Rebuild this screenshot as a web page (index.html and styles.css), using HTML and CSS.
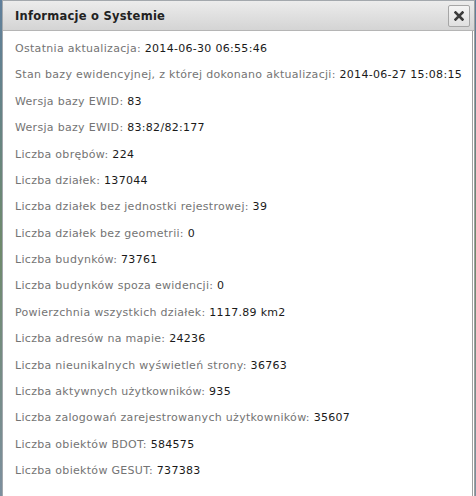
FILE: index.html
```html
<!DOCTYPE html>
<html lang="pl">
<head>
  <meta charset="UTF-8">
  <meta name="viewport" content="width=device-width, initial-scale=1.0">
  <title>Informacje o Systemie</title>
  <link rel="stylesheet" href="styles.css">
</head>
<body>
  <div class="dialog">
    <div class="dialog-header">
      <span class="dialog-title">Informacje o Systemie</span>
      <span class="dialog-close">
        <svg width="10" height="10" viewBox="0 0 10 10">
          <path d="M1.5 1.5 L8.5 8.5 M8.5 1.5 L1.5 8.5" stroke="#3c3c3c" stroke-width="2.6" stroke-linecap="square"/>
        </svg>
      </span>
    </div>
    <div class="dialog-content">
      <p>Ostatnia aktualizacja: <b>2014-06-30 06:55:46</b></p>
      <p>Stan bazy ewidencyjnej, z której dokonano aktualizacji: <b>2014-06-27 15:08:15</b></p>
      <p>Wersja bazy EWID: <b>83</b></p>
      <p>Wersja bazy EWID: <b>83:82/82:177</b></p>
      <p>Liczba obrębów: <b>224</b></p>
      <p>Liczba działek: <b>137044</b></p>
      <p>Liczba działek bez jednostki rejestrowej: <b>39</b></p>
      <p>Liczba działek bez geometrii: <b>0</b></p>
      <p>Liczba budynków: <b>73761</b></p>
      <p>Liczba budynków spoza ewidencji: <b>0</b></p>
      <p>Powierzchnia wszystkich działek: <b>1117.89 km2</b></p>
      <p>Liczba adresów na mapie: <b>24236</b></p>
      <p>Liczba nieunikalnych wyświetleń strony: <b>36763</b></p>
      <p>Liczba aktywnych użytkowników: <b>935</b></p>
      <p>Liczba zalogowań zarejestrowanych użytkowników: <b>35607</b></p>
      <p>Liczba obiektów BDOT: <b>584575</b></p>
      <p>Liczba obiektów GESUT: <b>737383</b></p>
    </div>
  </div>
</body>
</html>
```

FILE: styles.css
```css
body {
  margin: 0;
  background: linear-gradient(#5f7f9c, #6f8a6c 50%, #7c8f9e);
  font-family: 'DejaVu Sans', Verdana, sans-serif;
  height: 496px;
  overflow: hidden;
}
.dialog {
  margin-left: 2px;
  width: 473px;
  height: 496px;
  border: 1px solid #a3a8ad;
  border-bottom: none;
  border-right: 1px solid #a0a0a0;
  background: #fff;
  box-sizing: border-box;
  display: flex;
  flex-direction: column;
}
.dialog-header {
  height: 30px;
  flex-shrink: 0;
  background: linear-gradient(#ececec, #d4d4d4);
  border-bottom: 1px solid #b5b5b5;
  box-sizing: border-box;
  display: flex;
  align-items: center;
  justify-content: space-between;
  padding: 0 4px 0 12px;
}
.dialog-title {
  font-weight: bold;
  font-size: 11.5px;
  color: #222;
  letter-spacing: 0.25px;
}
.dialog-close {
  width: 20px;
  height: 20px;
  border: 1px solid #a6a6a6;
  border-radius: 2px;
  background: linear-gradient(#f4f4f4, #e0e0e0);
  display: flex;
  align-items: center;
  justify-content: center;
}
.dialog-content {
  flex: 1;
  margin-right: 1px;
  border-right: 1px solid #a0a0a0;
  padding: 11px 0 0 12px;
  font-size: 11px;
  letter-spacing: 0.3px;
  color: #747474;
  white-space: nowrap;
  overflow: hidden;
}
.dialog-content p {
  margin: 0;
  height: 26.375px;
  line-height: 14px;
}
.dialog-content b {
  font-weight: normal;
  color: #1a1a1a;
}
```
